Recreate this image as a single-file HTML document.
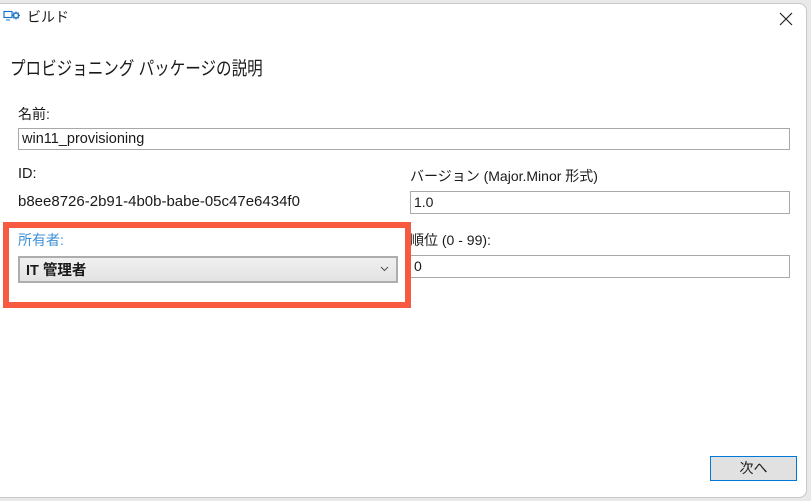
<!DOCTYPE html>
<html><head><meta charset="utf-8"><style>
*{margin:0;padding:0;box-sizing:border-box}
body{width:811px;height:501px;background:#e9e9e9;position:relative;overflow:hidden;font-family:"Segoe UI","Liberation Sans","Noto Sans CJK JP",sans-serif;color:#1a1a1a}
.win{position:absolute;left:0;top:3px;width:807px;height:495px;background:#fff;border:1px solid #c8c8c8;border-left:none;border-radius:0 8px 8px 0}
.a{position:absolute;white-space:nowrap}
.inp{position:absolute;border:1px solid #a8a8a8;background:#fff;font-size:14px;padding-left:3px;line-height:20px}
</style></head><body>
<div class="win"></div>
<svg class="a" style="left:3px;top:10px" width="18" height="12" viewBox="0 0 18 12"><rect x="1" y="1.5" width="8" height="6" fill="none" stroke="#1e73c8" stroke-width="1.2"/><path d="M3 10h4" stroke="#1e73c8"/><circle cx="13" cy="5.5" r="2.5" fill="none" stroke="#1e73c8" stroke-width="1.5"/><path d="M13 1.5v1.5M13 8v1.5M9 5.5h1.5M15.5 5.5H17M10.2 2.7l1 1M14.8 7.3l1 1M10.2 8.3l1-1M14.8 3.7l1-1" stroke="#1e73c8" stroke-width="1.2"/></svg>
<div class="a" style="left:27px;top:7px;font-size:14px">ビルド</div>
<svg class="a" style="left:779px;top:12px" width="14" height="14"><path d="M1 1L13 13M13 1L1 13" stroke="#222" stroke-width="1.2"/></svg>
<div class="a" style="left:10px;top:55px;font-size:18.5px;transform:scaleX(0.84);transform-origin:0 0">プロビジョニング パッケージの説明</div>
<div class="a" style="left:18px;top:104px;font-size:14px">名前:</div>
<div class="inp" style="left:18px;top:128px;width:772px;height:22px;font-size:14.5px">win11_provisioning</div>
<div class="a" style="left:18px;top:166px;font-size:14.5px">ID:</div>
<div class="a" style="left:18px;top:193px;font-size:15px">b8ee8726-2b91-4b0b-babe-05c47e6434f0</div>
<div class="a" style="left:410px;top:166px;font-size:14px">バージョン (Major.Minor 形式)</div>
<div class="inp" style="left:410px;top:191px;width:380px;height:23px">1.0</div>
<div class="a" style="left:410px;top:230px;font-size:14px">順位 (0 - 99):</div>
<div class="inp" style="left:410px;top:255px;width:380px;height:23px">0</div>
<div class="a" style="left:3px;top:222px;width:408px;height:86px;border:6px solid #f75a40"></div>
<div class="a" style="left:18px;top:230px;font-size:14px;color:#3d8fd6">所有者:</div>
<div class="a" style="left:18px;top:256px;width:380px;height:27px;border:2px solid #adadad;background:linear-gradient(#f0f0f0,#e3e3e3)"></div>
<div class="a" style="left:26px;top:259px;font-size:14.5px;font-weight:bold">IT 管理者</div>
<svg class="a" style="left:380px;top:266px" width="9" height="6"><path d="M1 1l3.5 3.5L8 1" fill="none" stroke="#555"/></svg>
<div class="a" style="left:710px;top:456px;width:87px;height:25px;border:1px solid #0078d7;background:#e1e1e1;font-size:14px;text-align:center;line-height:22px">次へ</div>
</body></html>
